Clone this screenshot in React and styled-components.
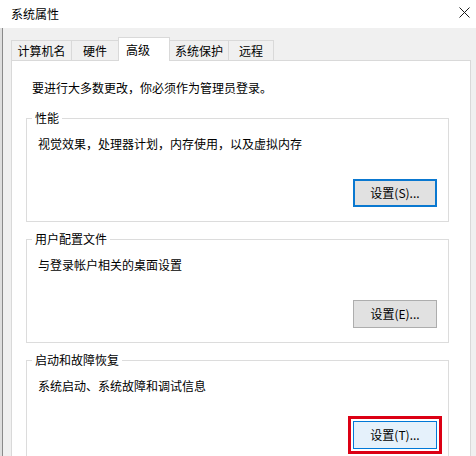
import React from 'react';
import styled, { createGlobalStyle } from 'styled-components';

const GlobalStyle = createGlobalStyle`
    html, body {
        margin: 0;
        padding: 0;
        background: #f0f0f0;
    }
    body {
        font-family: "Noto Sans CJK SC", "Noto Sans", sans-serif;
        font-size: 12px;
        color: #000;
    }
`;

const Window = styled.div`
    width: 476px;
    height: 456px;
    display: flex;
    flex-direction: column;
    overflow: hidden;
`;

const TitleBar = styled.div`
    height: 28px;
    flex-shrink: 0;
    background: #fff;
    display: grid;
    grid-template-columns: 1fr 24px;
    align-items: center;
    padding: 0 0 0 11px;
`;

const Title = styled.span`
    line-height: 16px;
    margin-top: -1px;
`;

const CloseButton = styled.span`
    display: flex;
    align-items: center;
    justify-content: center;
    height: 20px;
    margin-top: -4px;
    svg {
        display: block;
    }
`;

const Frame = styled.div`
    flex: 1;
    display: flex;
    min-height: 0;
`;

// the edge of the window behind the dialog
const Edge = styled.div`
    width: 2px;
    background: #dedede;
    border-right: 1px solid #8a8a8a;
    flex-shrink: 0;
`;

const Body = styled.div`
    flex: 1;
    padding: 9px 5px 0 8px;
    display: flex;
    flex-direction: column;
    min-height: 0;
`;

const TabRow = styled.div`
    display: flex;
    align-items: flex-end;
    height: 23px;
    flex-shrink: 0;
`;

const Tab = styled.div`
    box-sizing: border-box;
    width: ${p => p.$w}px;
    height: ${p => (p.$active ? 24 : 20)}px;
    margin-bottom: ${p => (p.$active ? -1 : 0)}px;
    margin-left: -1px;
    border: 1px solid #d9d9d9;
    border-bottom: none;
    background: ${p => (p.$active ? '#fff' : '#f0f0f0')};
    position: relative;
    z-index: ${p => (p.$active ? 1 : 0)};
    display: flex;
    align-items: ${p => (p.$active ? 'flex-start' : 'center')};
    justify-content: ${p => (p.$active ? 'flex-start' : 'center')};
    padding: ${p => (p.$active ? '4px 0 0 7px' : '0')};
    line-height: 16px;
    &:first-child {
        margin-left: 0;
    }
`;

const Panel = styled.div`
    flex: 1;
    background: #fff;
    border: 1px solid #d9d9d9;
    border-bottom: none;
    padding: 19px 21px 0 14px;
`;

const Intro = styled.div`
    line-height: 16px;
    padding-left: 6px;
`;

const GroupBox = styled.div`
    position: relative;
    border: 1px solid #dcdcdc;
    margin-top: ${p => p.$gap}px;
    padding: 17px 11px 14px 11px;
`;

const Legend = styled.span`
    position: absolute;
    top: -9px;
    left: 5px;
    padding: 0 3px;
    background: #fff;
    line-height: 16px;
`;

const Desc = styled.div`
    line-height: 16px;
`;

const ButtonRow = styled.div`
    display: flex;
    justify-content: flex-end;
    margin-top: 27px;
`;

const variants = {
    focused: 'background: #e1e1e1; border: 2px solid #0a78d0;',
    normal: 'background: #e1e1e1; border: 1px solid #adadad;',
    hover: 'background: #e5f1fb; border: 1px solid #0078d7;',
};

const Button = styled.button`
    box-sizing: border-box;
    width: 84px;
    height: 28px;
    font-family: inherit;
    font-size: 12px;
    color: #000;
    padding: 0;
    line-height: 16px;
    ${p => variants[p.$variant]}
    outline: ${p => (p.$marked ? '3px solid #dc0014' : 'none')};
    outline-offset: 2px;
`;

const tabs = [
    { label: '计算机名', w: 61 },
    { label: '硬件', w: 48 },
    { label: '高级', w: 52, active: true },
    { label: '系统保护', w: 60 },
    { label: '远程', w: 46 },
];

const groups = [
    { title: '性能', desc: '视觉效果，处理器计划，内存使用，以及虚拟内存', button: '设置(S)...', variant: 'focused', gap: 22 },
    { title: '用户配置文件', desc: '与登录帐户相关的桌面设置', button: '设置(E)...', variant: 'normal', gap: 17 },
    { title: '启动和故障恢复', desc: '系统启动、系统故障和调试信息', button: '设置(T)...', variant: 'hover', gap: 17, marked: true },
];

const App = () => {
    return (
        <>
            <GlobalStyle />
            <Window>
                <TitleBar>
                    <Title>系统属性</Title>
                    <CloseButton aria-label="关闭">
                        <svg width="11" height="11" viewBox="0 0 11 11" fill="none">
                            <path d="M0.5 0.5 L10.5 10.5 M10.5 0.5 L0.5 10.5" stroke="#1a1a1a" strokeWidth="1" />
                        </svg>
                    </CloseButton>
                </TitleBar>
                <Frame>
                    <Edge />
                    <Body>
                        <TabRow>
                            {tabs.map(t => (
                                <Tab key={t.label} $w={t.w} $active={t.active}>{t.label}</Tab>
                            ))}
                        </TabRow>
                        <Panel>
                            <Intro>要进行大多数更改，你必须作为管理员登录。</Intro>
                            {groups.map(g => (
                                <GroupBox key={g.title} $gap={g.gap}>
                                    <Legend>{g.title}</Legend>
                                    <Desc>{g.desc}</Desc>
                                    <ButtonRow>
                                        <Button $variant={g.variant} $marked={g.marked}>{g.button}</Button>
                                    </ButtonRow>
                                </GroupBox>
                            ))}
                        </Panel>
                    </Body>
                </Frame>
            </Window>
        </>
    );
};

export default App;
